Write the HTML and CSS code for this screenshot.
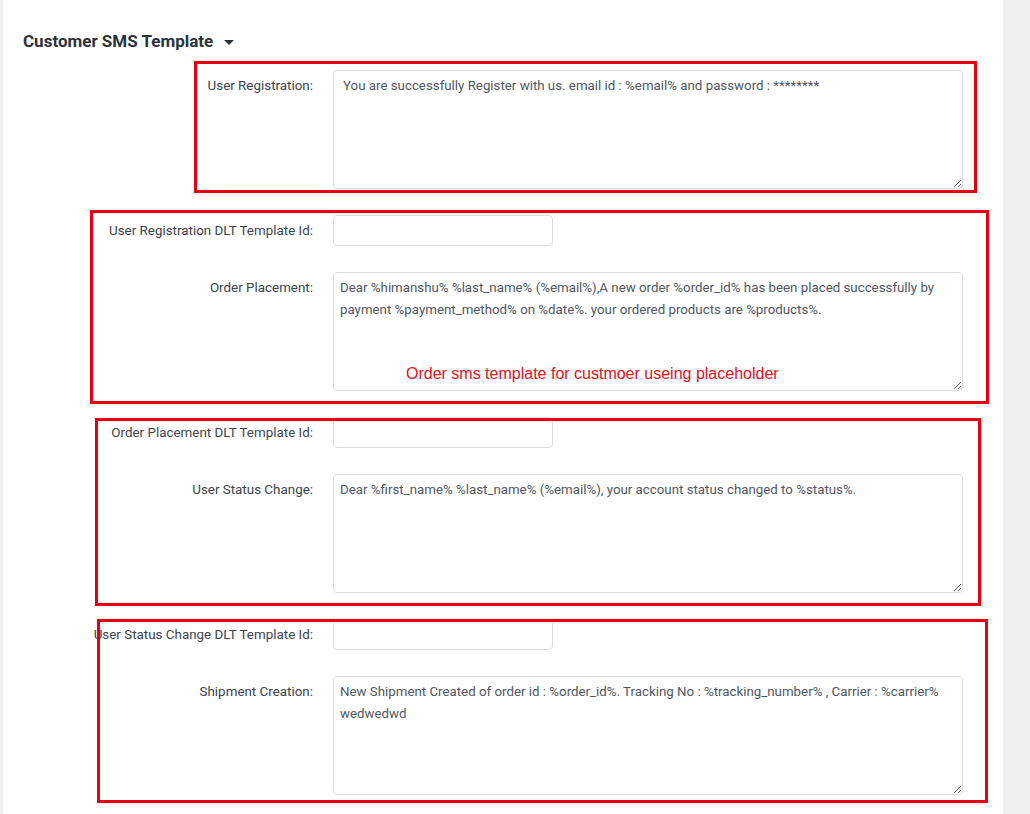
FILE: index.html
```html
<!DOCTYPE html>
<html lang="en">
<head>
<meta charset="utf-8">
<title>Customer SMS Template</title>
<link rel="stylesheet" href="styles.css">
</head>
<body>
<div class="screen">
  <div class="gutter-left"></div>
  <main class="panel">
    <h2 class="section-title">Customer SMS Template <span class="caret"></span></h2>
    <div class="form">
      <label class="lbl" for="t1">User Registration:</label>
      <div class="field"><textarea id="t1" class="ta ta-first">You are successfully Register with us. email id : %email% and password : ********</textarea></div>

      <label class="lbl" for="i1">User Registration DLT Template Id:</label>
      <div class="field"><input id="i1" class="inp" type="text"></div>

      <label class="lbl" for="t2">Order Placement:</label>
      <div class="field"><textarea id="t2" class="ta">Dear %himanshu% %last_name% (%email%),A new order %order_id% has been placed successfully by payment %payment_method% on %date%. your ordered products are %products%.</textarea></div>

      <label class="lbl" for="i2">Order Placement DLT Template Id:</label>
      <div class="field"><input id="i2" class="inp" type="text"></div>

      <label class="lbl" for="t3">User Status Change:</label>
      <div class="field"><textarea id="t3" class="ta">Dear %first_name% %last_name% (%email%), your account status changed to %status%.</textarea></div>

      <label class="lbl" for="i3">User Status Change DLT Template Id:</label>
      <div class="field"><input id="i3" class="inp" type="text"></div>

      <label class="lbl" for="t4">Shipment Creation:</label>
      <div class="field"><textarea id="t4" class="ta">New Shipment Created of order id : %order_id%. Tracking No : %tracking_number% , Carrier : %carrier%
wedwedwd</textarea></div>
    </div>
  </main>
  <div class="gutter-right"></div>

  <div class="mark mark-1"></div>
  <div class="mark mark-2"></div>
  <div class="mark mark-3"></div>
  <div class="mark mark-4"></div>
  <p class="mark-note">Order sms template for custmoer useing placeholder</p>
</div>
</body>
</html>
```

FILE: styles.css
```css
html, body {
  margin: 0;
  padding: 0;
  background: #f0f0f1;
}

.screen {
  position: relative;
  display: flex;
  width: 1030px;
  min-height: 814px;
  overflow: hidden;
  font-family: Roboto, "Liberation Sans", sans-serif;
}

.gutter-left {
  width: 3px;
  flex: none;
  background: #f0f0f1;
}

.panel {
  width: 1000px;
  flex: none;
  background: #ffffff;
  padding: 29px 0 0 20px;
  box-sizing: border-box;
  min-height: 814px;
}

.gutter-right {
  flex: 1;
  background: #f0f0f1;
}

.section-title {
  margin: 0;
  font-size: 17px;
  line-height: 24px;
  font-weight: 700;
  color: #2c3338;
  display: flex;
  align-items: center;
}

.caret {
  display: inline-block;
  width: 0;
  height: 0;
  margin-left: 11px;
  margin-top: 2px;
  border-left: 5px solid transparent;
  border-right: 5px solid transparent;
  border-top: 5px solid #2c3338;
}

.form {
  margin-top: 17px;
  display: grid;
  grid-template-columns: 290px 630px;
  column-gap: 20px;
  row-gap: 26px;
  align-items: start;
}

.lbl {
  text-align: right;
  font-size: 13.4px;
  line-height: 30px;
  padding-top: 1px;
  color: #3c434a;
  white-space: nowrap;
}

.field {
  display: flex;
}

.ta {
  width: 630px;
  height: 119px;
  box-sizing: border-box;
  border: 1px solid #dcdcde;
  border-radius: 4px;
  padding: 4px 6px;
  margin: 0;
  font-family: Roboto, "Liberation Sans", sans-serif;
  font-size: 13.3px;
  line-height: 22px;
  color: #50575e;
  background: #fff;
  resize: vertical;
  outline: none;
}

.ta-first {
  padding-left: 9px;
}

.inp {
  width: 220px;
  height: 31px;
  box-sizing: border-box;
  border: 1px solid #dcdcde;
  border-radius: 4px;
  padding: 0 8px;
  margin: 0;
  font-family: Roboto, "Liberation Sans", sans-serif;
  font-size: 13px;
  background: #fff;
  outline: none;
}

.mark {
  position: absolute;
  border: 3px solid #e60012;
  box-sizing: border-box;
  pointer-events: none;
}

.mark-1 { left: 194px; top: 61px; width: 783px; height: 132px; }
.mark-2 { left: 90px;  top: 210px; width: 899px; height: 194px; }
.mark-3 { left: 95px;  top: 418px; width: 886px; height: 188px; }
.mark-4 { left: 97px;  top: 619px; width: 891px; height: 184px; }

.mark-note {
  position: absolute;
  left: 406px;
  top: 364px;
  margin: 0;
  font-family: "Liberation Sans", Arial, sans-serif;
  font-size: 16px;
  line-height: 20px;
  color: #e3101b;
  white-space: nowrap;
}
```
